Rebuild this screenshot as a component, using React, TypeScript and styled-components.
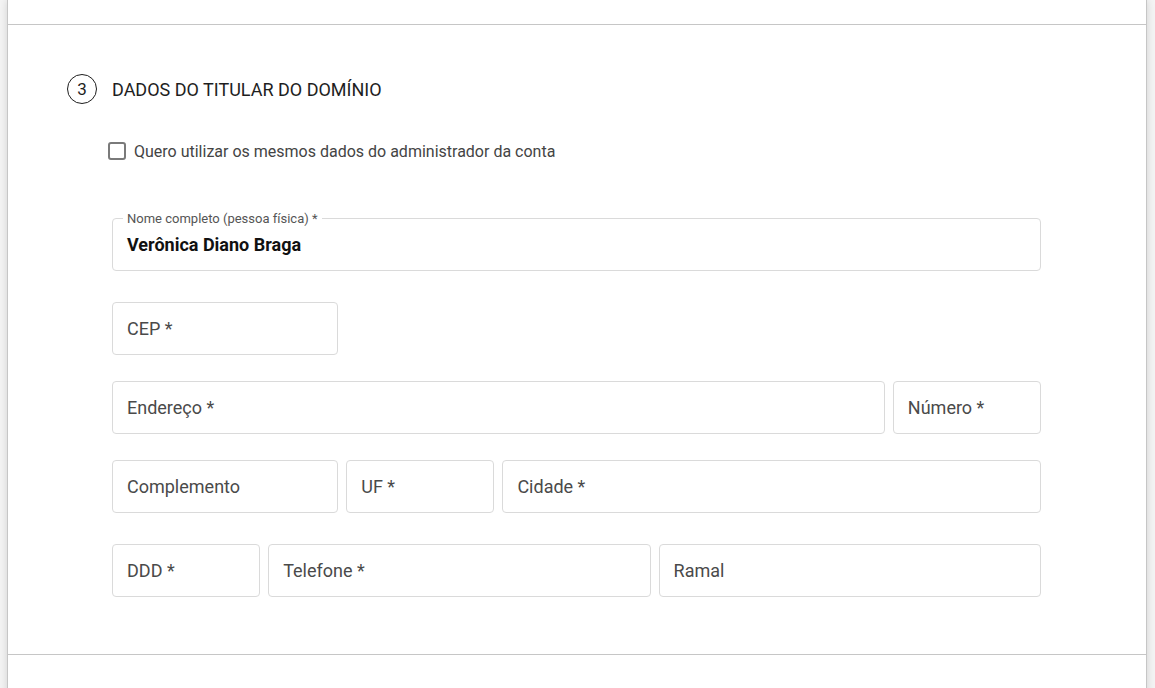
import React from "react";
import styled, { createGlobalStyle } from "styled-components";

const Global = createGlobalStyle`
  html, body { margin: 0; padding: 0; }
  body {
    background: #f4f4f4;
    font-family: Roboto, "Liberation Sans", Arial, sans-serif;
    overflow: hidden;
    height: 688px;
  }
`;

const Page = styled.div`
  padding: 0 8px 0 7px;
`;

const Card = styled.div`
  background: #fff;
  border-left: 1px solid #c6c6c6;
  border-right: 1px solid #c6c6c6;
  box-shadow: 0 0 8px rgba(0, 0, 0, 0.14);
`;

const Section = styled.section<{ $h?: number }>`
  ${(p) => (p.$h ? `height: ${p.$h}px;` : "")}
  & + & {
    border-top: 1px solid #c6c6c6;
  }
`;

const Body = styled.div`
  padding: 49px 105px 57px 59px;
`;

const Header = styled.div`
  display: flex;
  align-items: center;
  gap: 15px;
  height: 30px;
`;

const Step = styled.span`
  width: 28px;
  height: 28px;
  border: 1px solid #1e1e1e;
  border-radius: 50%;
  display: flex;
  align-items: center;
  justify-content: center;
  font-size: 17px;
  color: #1e1e1e;
`;

const Title = styled.h2`
  margin: 0;
  font-size: 18px;
  font-weight: 400;
  color: #1e1e1e;
  text-transform: uppercase;
`;

const CheckRow = styled.label`
  display: flex;
  align-items: center;
  gap: 8px;
  margin: 35px 0 0 41px;
  height: 24px;
  font-size: 16px;
  color: #444;
  cursor: pointer;
`;

const Box = styled.span`
  width: 14px;
  height: 14px;
  border: 2px solid #7a7a7a;
  border-radius: 3px;
  box-sizing: content-box;
`;

const Form = styled.div`
  margin-left: 45px;
  margin-top: 55px;
`;

const Row = styled.div<{ $mt?: number }>`
  display: grid;
  grid-template-columns: repeat(12, 1fr);
  column-gap: 8px;
  margin-top: ${(p) => p.$mt ?? 0}px;
`;

const Field = styled.div<{ $span: number }>`
  grid-column: span ${(p) => p.$span};
  position: relative;
  height: 53px;
  box-sizing: border-box;
  border: 1px solid #dadada;
  border-radius: 4px;
  display: flex;
  align-items: center;
  padding: 0 14px;
  font-size: 18px;
  color: #4a4a4a;
`;

const Value = styled.span`
  font-weight: 700;
  color: #111;
  margin-top: -1px;
`;

const FloatLabel = styled.span`
  position: absolute;
  top: -8px;
  left: 10px;
  padding: 0 4px;
  background: #fff;
  font-size: 13px;
  line-height: 15px;
  color: #555;
`;

export default function App() {
  return (
    <>
      <Global />
      <Page>
        <Card>
          <Section $h={24} />
          <Section>
            <Body>
              <Header>
                <Step>3</Step>
                <Title>Dados do titular do domínio</Title>
              </Header>
              <CheckRow>
                <Box />
                Quero utilizar os mesmos dados do administrador da conta
              </CheckRow>
              <Form>
                <Row>
                  <Field $span={12}>
                    <FloatLabel>Nome completo (pessoa física) *</FloatLabel>
                    <Value>Verônica Diano Braga</Value>
                  </Field>
                </Row>
                <Row $mt={31}>
                  <Field $span={3}>CEP *</Field>
                </Row>
                <Row $mt={26}>
                  <Field $span={10}>Endereço *</Field>
                  <Field $span={2}>Número *</Field>
                </Row>
                <Row $mt={26}>
                  <Field $span={3}>Complemento</Field>
                  <Field $span={2}>UF *</Field>
                  <Field $span={7}>Cidade *</Field>
                </Row>
                <Row $mt={31}>
                  <Field $span={2}>DDD *</Field>
                  <Field $span={5}>Telefone *</Field>
                  <Field $span={5}>Ramal</Field>
                </Row>
              </Form>
            </Body>
          </Section>
          <Section $h={60} />
        </Card>
      </Page>
    </>
  );
}
